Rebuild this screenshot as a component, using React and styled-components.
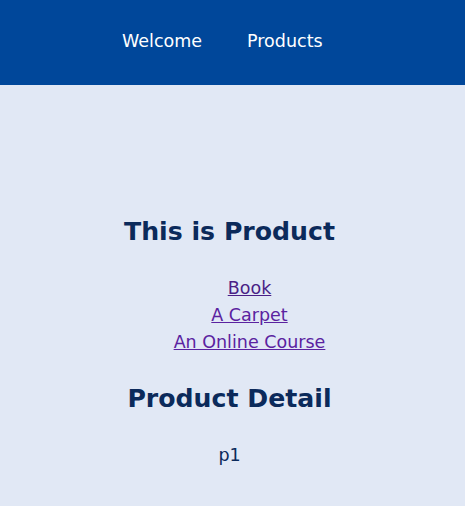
import React from "react";
import styled, { createGlobalStyle } from "styled-components";

const GlobalStyle = createGlobalStyle`
  html, body {
    margin: 0;
    padding: 0;
    background-color: #e1e8f5;
    font-family: "DejaVu Sans", "Noto Sans CJK JP", sans-serif;
  }
`;

const Header = styled.header`
  height: 85px;
  background-color: #00479a;
  display: flex;
  align-items: center;
  padding-left: 122px;
  gap: 45px;
`;

const NavLink = styled.a`
  color: #fff;
  font-size: 17.5px;
  text-decoration: none;
  line-height: 24px;
  margin-top: -4px;
`;

const Main = styled.main`
  padding: 130px 6px 40px 0;
  text-align: center;
  color: #0b2a5b;
`;

const Title = styled.h1`
  margin: 0 0 26px;
  font-size: 25.2px;
  line-height: 34px;
  font-weight: 700;
`;

const LinkList = styled.ul`
  list-style: none;
  margin: 0 0 26px;
  padding-left: 40px;
`;

const Item = styled.li`
  font-size: 17.5px;
  line-height: 27px;
`;

const ProductLink = styled.a`
  color: ${(p) => (p.$visited ? "#4a1f86" : "#5a22a0")};
  text-decoration: underline;
`;

const Text = styled.p`
  margin: 26px 0 0;
  font-size: 17.5px;
  line-height: 27px;
`;

const products = [
  { id: "p1", name: "Book", visited: true },
  { id: "p2", name: "A Carpet" },
  { id: "p3", name: "An Online Course" },
];

export default function App() {
  return (
    <>
      <GlobalStyle />
      <Header>
        <NavLink href="#">Welcome</NavLink>
        <NavLink href="#">Products</NavLink>
      </Header>
      <Main>
        <Title>This is Product</Title>
        <LinkList>
          {products.map((p) => (
            <Item key={p.id}>
              <ProductLink href="#" $visited={p.visited}>
                {p.name}
              </ProductLink>
            </Item>
          ))}
        </LinkList>
        <Title as="h2">Product Detail</Title>
        <Text>p1</Text>
      </Main>
    </>
  );
}
